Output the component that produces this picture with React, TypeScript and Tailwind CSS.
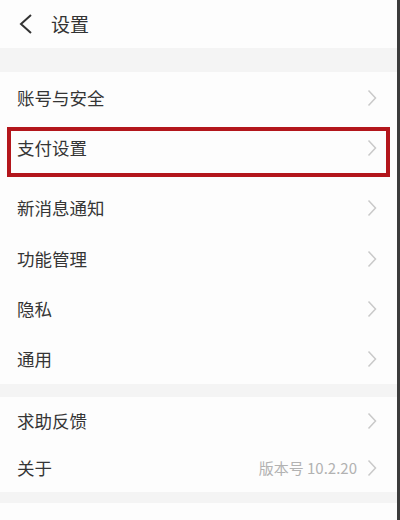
const font = { fontFamily: '"Noto Sans CJK SC", "Noto Sans", sans-serif' };

function Chevron() {
  return (
    <svg width="10" height="18" viewBox="0 0 10 18" className="shrink-0">
      <polyline points="1.5,1.5 8.5,9 1.5,16.5" fill="none" stroke="#c9c9c9" strokeWidth="1.5" />
    </svg>
  );
}

function Row({ label, extra, h }: { label: string; extra?: string; h: string }) {
  return (
    <div className={`flex items-center justify-between bg-[#fdfdfd] pl-[17px] pr-[20px] ${h}`}>
      <span className="text-[17.5px] leading-6 text-[#353535]">{label}</span>
      <div className="flex items-center gap-[10px]">
        {extra && <span className="text-[15px] text-[#b2b2b2]">{extra}</span>}
        <Chevron />
      </div>
    </div>
  );
}

export default function App() {
  return (
    <div style={font} className="flex h-[520px] w-[400px] flex-col overflow-hidden border-r-[3px] border-[#3c3c3c] bg-[#fdfdfd]">
      <header className="flex h-[48px] items-center gap-[17px] pl-[18px]">
        <svg width="16" height="22" viewBox="0 0 16 22">
          <polyline points="13,2 3,11 13,20" fill="none" stroke="#333" strokeWidth="2" />
        </svg>
        <span className="text-[19px] text-[#333]">设置</span>
      </header>
      <div className="h-[24px] bg-[#f4f4f4]" />
      <Row label="账号与安全" h="h-[51px]" />
      <div className="h-[60px] bg-[#fdfdfd] px-[7px] pt-[4px]">
        <div className="flex h-[50px] items-start justify-between border-[4px] border-[#b3161c] pl-[6px] pr-[9px] pt-[5px]">
          <span className="text-[17.5px] leading-6 text-[#353535]">支付设置</span>
          <div className="mt-[3px]">
            <Chevron />
          </div>
        </div>
      </div>
      <Row label="新消息通知" h="h-[50px]" />
      <Row label="功能管理" h="h-[51px]" />
      <Row label="隐私" h="h-[50px]" />
      <Row label="通用" h="h-[50px]" />
      <div className="h-[13px] bg-[#f4f4f4]" />
      <Row label="求助反馈" h="h-[47px]" />
      <Row label="关于" extra="版本号 10.2.20" h="h-[48px]" />
      <div className="h-[11px] bg-[#f4f4f4]" />
      <div className="flex-1 bg-[#fdfdfd]" />
    </div>
  );
}
